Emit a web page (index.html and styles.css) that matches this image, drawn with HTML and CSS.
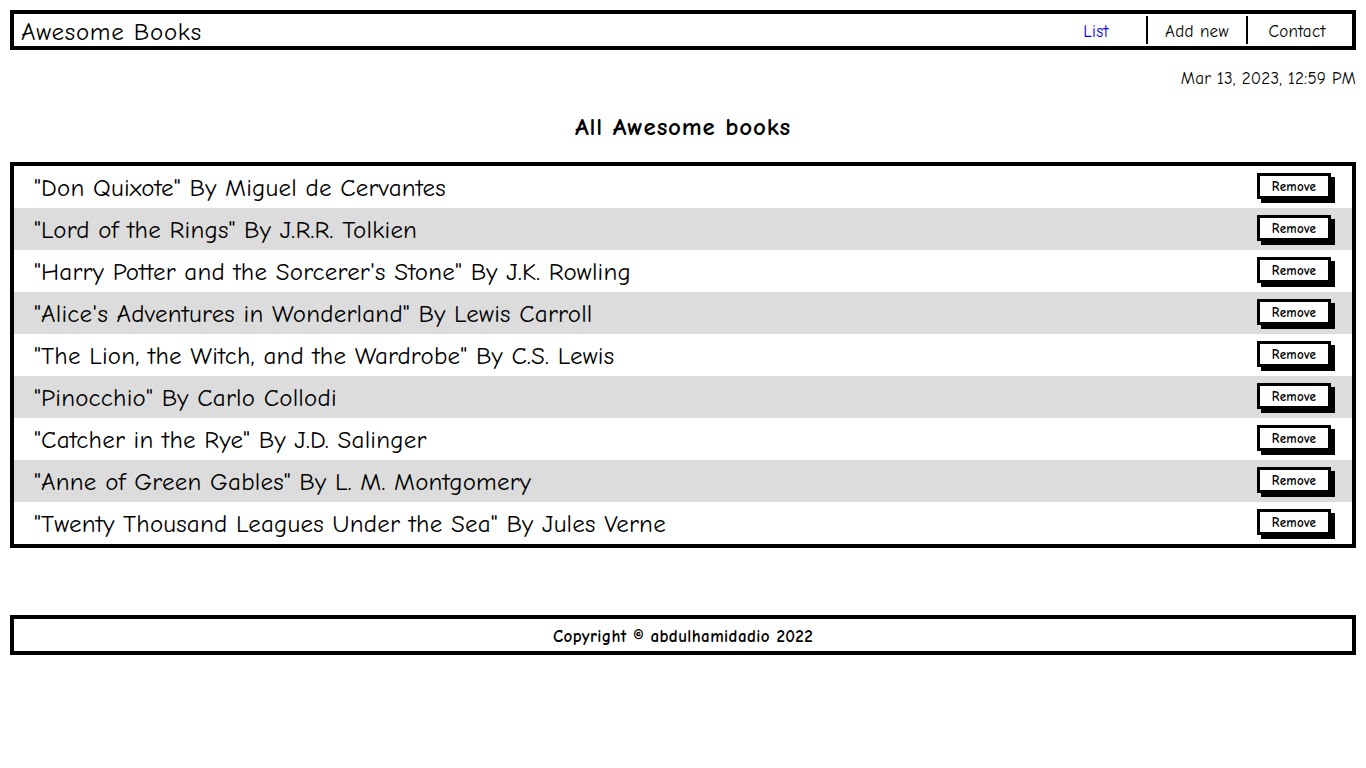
FILE: index.html
```html
<!DOCTYPE html>
<html lang="en">
<head>
<meta charset="utf-8">
<title>Awesome Books</title>
<link rel="stylesheet" href="styles.css">
</head>
<body>
<header class="topbar">
  <h1 class="brand">Awesome Books</h1>
  <nav class="nav">
    <a class="nav-link active" href="#">List</a>
    <a class="nav-link sep" href="#">Add new</a>
    <a class="nav-link sep" href="#">Contact</a>
  </nav>
</header>
<p class="date">Mar 13, 2023, 12:59 PM</p>
<h2 class="title">All Awesome books</h2>
<ul class="books">
  <li class="book"><span class="book-text">"Don Quixote" By Miguel de Cervantes</span><button class="remove">Remove</button></li>
  <li class="book"><span class="book-text">"Lord of the Rings" By J.R.R. Tolkien</span><button class="remove">Remove</button></li>
  <li class="book"><span class="book-text">"Harry Potter and the Sorcerer's Stone" By J.K. Rowling</span><button class="remove">Remove</button></li>
  <li class="book"><span class="book-text">"Alice's Adventures in Wonderland" By Lewis Carroll</span><button class="remove">Remove</button></li>
  <li class="book"><span class="book-text">"The Lion, the Witch, and the Wardrobe" By C.S. Lewis</span><button class="remove">Remove</button></li>
  <li class="book"><span class="book-text">"Pinocchio" By Carlo Collodi</span><button class="remove">Remove</button></li>
  <li class="book"><span class="book-text">"Catcher in the Rye" By J.D. Salinger</span><button class="remove">Remove</button></li>
  <li class="book"><span class="book-text">"Anne of Green Gables" By L. M. Montgomery</span><button class="remove">Remove</button></li>
  <li class="book"><span class="book-text">"Twenty Thousand Leagues Under the Sea" By Jules Verne</span><button class="remove">Remove</button></li>
</ul>
<footer class="footer">Copyright © abdulhamidadio 2022</footer>
</body>
</html>
```
FILE: styles.css
```css
* { box-sizing: border-box; }
body {
  margin: 0;
  padding: 10px;
  font-family: "Comic Sans MS", "Comic Neue", "DejaVu Sans", sans-serif;
  color: #000;
  background: #fff;
}
.topbar {
  display: flex;
  align-items: center;
  justify-content: space-between;
  height: 40px;
  border: 4px solid #000;
  padding: 0 6px 0 7px;
}
.brand {
  margin: 0;
  font-size: 25px;
  letter-spacing: 0.75px;
  font-weight: normal;
  line-height: 32px;
  padding-top: 3px;
}
.nav {
  display: flex;
  align-items: center;
  height: 28px;
}
.nav-link {
  width: 100px;
  height: 28px;
  display: flex;
  align-items: center;
  justify-content: center;
  padding-top: 2px;
  font-size: 17px;
  letter-spacing: 0.3px;
  color: #000;
  text-decoration: none;
}
.nav-link.active { color: #0000ff; }
.nav-link.sep { border-left: 2px solid #000; }
.date {
  margin: 19px 0 0;
  text-align: right;
  font-size: 17px;
  letter-spacing: 0.2px;
  line-height: 20px;
}
.title {
  margin: 23px 0 0;
  text-align: center;
  font-size: 25px;
  letter-spacing: 0.8px;
  font-weight: bold;
  line-height: 30px;
}
.books {
  list-style: none;
  margin: 20px 0 0;
  padding: 0;
  border: 4px solid #000;
}
.book {
  display: flex;
  align-items: center;
  justify-content: space-between;
  height: 42px;
  padding: 0 20px 0 20px;
}
.book:nth-child(even) { background: #dcdcdc; }
.book-text {
  font-size: 25px;
  letter-spacing: 0.2px;
}
.remove {
  font-family: inherit;
  font-size: 13px;
  letter-spacing: 0.3px;
  font-weight: bold;
  width: 74px;
  height: 26px;
  margin-right: 1px;
  margin-top: -3px;
  background: #fff;
  border: 3px solid #000;
  box-shadow: 4px 4px 0 #000;
  padding: 2px 0 0;
  color: #000;
}
.footer {
  margin-top: 67px;
  border: 4px solid #000;
  height: 40px;
  display: flex;
  align-items: center;
  justify-content: center;
  padding-top: 2px;
  font-size: 17px;
  letter-spacing: 0.4px;
  font-weight: bold;
}
```
